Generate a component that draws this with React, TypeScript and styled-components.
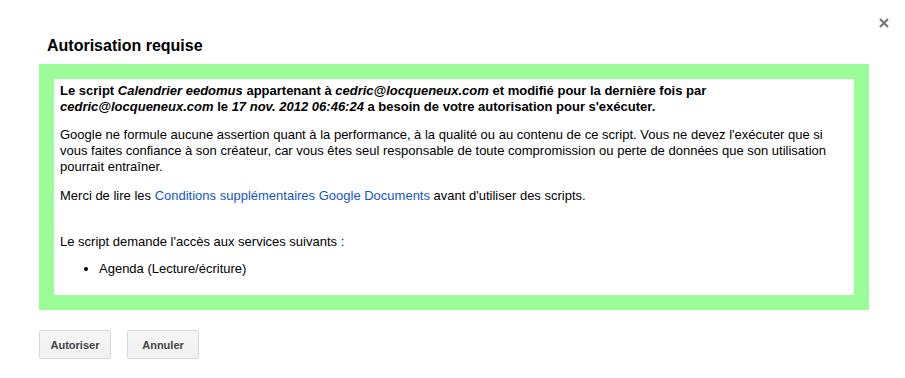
import React from "react";
import styled, { createGlobalStyle } from "styled-components";

const GlobalStyle = createGlobalStyle`
  body {
    margin: 0;
    background: #fff;
    font-family: "Liberation Sans", Arial, sans-serif;
  }
`;

const Dialog = styled.div`
  position: relative;
  width: 905px;
  height: 378px;
  box-sizing: border-box;
  padding: 34px 0 0 39px;
  background: #fff;
`;

const Close = styled.div`
  position: absolute;
  top: 14px;
  right: 16px;
  width: 10px;
  height: 10px;
`;

const Title = styled.h2`
  margin: 0 0 6px 8px;
  font-size: 16px;
  line-height: 24px;
  font-weight: bold;
  color: #000;
`;

const Frame = styled.div`
  width: 830px;
  box-sizing: border-box;
  padding: 15px;
  background: #9afd98;
`;

const Content = styled.div`
  background: #fff;
  padding: 4px 6px 18px;
  font-size: 13px;
  line-height: 16px;
  color: #000;
`;

const Para = styled.p<{ $top?: number; $bold?: boolean }>`
  margin: ${(p) => p.$top ?? 0}px 0 0;
  font-weight: ${(p) => (p.$bold ? "bold" : "normal")};
`;

const Link = styled.a`
  color: #1155cc;
  text-decoration: none;
`;

const List = styled.ul`
  margin: 11px 0 0;
  padding-left: 39px;
`;

const Actions = styled.div`
  display: flex;
  gap: 16px;
  margin-top: 20px;
`;

const Button = styled.button`
  width: 72px;
  height: 29px;
  box-sizing: border-box;
  border: 1px solid #d9d9d9;
  border-radius: 2px;
  background: linear-gradient(#f5f5f5, #f1f1f1);
  color: #444;
  font-family: "Liberation Sans", Arial, sans-serif;
  font-size: 11px;
  font-weight: bold;
  padding: 0;
`;

export default function App() {
  return (
    <>
      <GlobalStyle />
      <Dialog>
        <Close>
          <svg width="10" height="10" viewBox="0 0 10 10">
            <path d="M1 1L9 9M9 1L1 9" stroke="#777" strokeWidth="2.2" />
          </svg>
        </Close>
        <Title>Autorisation requise</Title>
        <Frame>
          <Content>
            <Para $bold>
              Le script <i>Calendrier eedomus</i> appartenant à{" "}
              <i>cedric@locqueneux.com</i> et modifié pour la dernière fois par
              <br />
              <i>cedric@locqueneux.com</i> le <i>17 nov. 2012 06:46:24</i> a
              besoin de votre autorisation pour s'exécuter.
            </Para>
            <Para $top={12}>
              Google ne formule aucune assertion quant à la performance, à la
              qualité ou au contenu de ce script. Vous ne devez l'exécuter que si
              <br />
              vous faites confiance à son créateur, car vous êtes seul
              responsable de toute compromission ou perte de données que son
              utilisation
              <br />
              pourrait entraîner.
            </Para>
            <Para $top={13}>
              Merci de lire les{" "}
              <Link href="#">Conditions supplémentaires Google Documents</Link>{" "}
              avant d'utiliser des scripts.
            </Para>
            <Para $top={30}>
              Le script demande l'accès aux services suivants :
            </Para>
            <List>
              <li>Agenda (Lecture/écriture)</li>
            </List>
          </Content>
        </Frame>
        <Actions>
          <Button>Autoriser</Button>
          <Button>Annuler</Button>
        </Actions>
      </Dialog>
    </>
  );
}
